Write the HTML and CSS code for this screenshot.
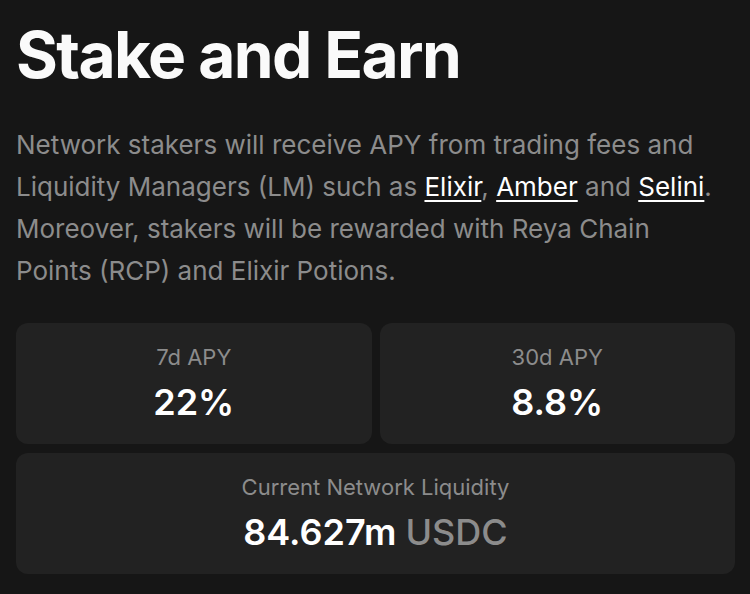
FILE: index.html
```html
<!DOCTYPE html>
<html>
<head>
<meta charset="utf-8">
<link rel="stylesheet" href="styles.css">
</head>
<body>
<main class="page">
  <h1 class="title">Stake and Earn</h1>
  <p class="intro">Network stakers will receive APY from trading fees and Liquidity Managers (LM) such as <a href="#">Elixir</a>, <a href="#">Amber</a> and <a href="#">Selini</a>. Moreover, stakers will be rewarded with Reya Chain Points (RCP) and Elixir Potions.</p>
  <section class="stats">
    <div class="card">
      <div class="label">7d APY</div>
      <div class="value">22%</div>
    </div>
    <div class="card">
      <div class="label">30d APY</div>
      <div class="value">8.8%</div>
    </div>
    <div class="card wide">
      <div class="label">Current Network Liquidity</div>
      <div class="value">84.627m <span class="unit">USDC</span></div>
    </div>
  </section>
</main>
</body>
</html>
```
FILE: styles.css
```css
html, body {
  margin: 0;
  padding: 0;
  background: #161616;
}
body {
  font-family: Inter, "Liberation Sans", sans-serif;
  color: #fafafa;
  width: 750px;
  height: 594px;
  overflow: hidden;
}
.page {
  padding: 17px 15px 0 16px;
}
.title {
  margin: 0;
  font-size: 64px;
  font-weight: 700;
  line-height: 76px;
  letter-spacing: -1.6px;
}
.intro {
  margin: 31px 0 0 0;
  max-width: 705px;
  font-size: 26px;
  line-height: 42px;
  color: #8c8c8c;
  letter-spacing: 0;
}
.intro a {
  color: #ffffff;
  text-decoration: underline;
  text-underline-offset: 4px;
  text-decoration-thickness: 1.5px;
}
.stats {
  margin-top: 31px;
  display: grid;
  grid-template-columns: 1fr 1fr;
  gap: 9px 8px;
}
.card {
  background: #222222;
  border-radius: 12px;
  height: 121px;
  display: flex;
  flex-direction: column;
  align-items: center;
  justify-content: center;
  gap: 10px;
  padding-bottom: 2px;
  box-sizing: border-box;
}
.card.wide {
  grid-column: 1 / 3;
}
.label {
  font-size: 22px;
  line-height: 28px;
  color: #8c8c8c;
}
.value {
  font-size: 36px;
  font-weight: 600;
  line-height: 42px;
  color: #ffffff;
}
.unit {
  color: #8c8c8c;
  font-weight: 500;
}
```
